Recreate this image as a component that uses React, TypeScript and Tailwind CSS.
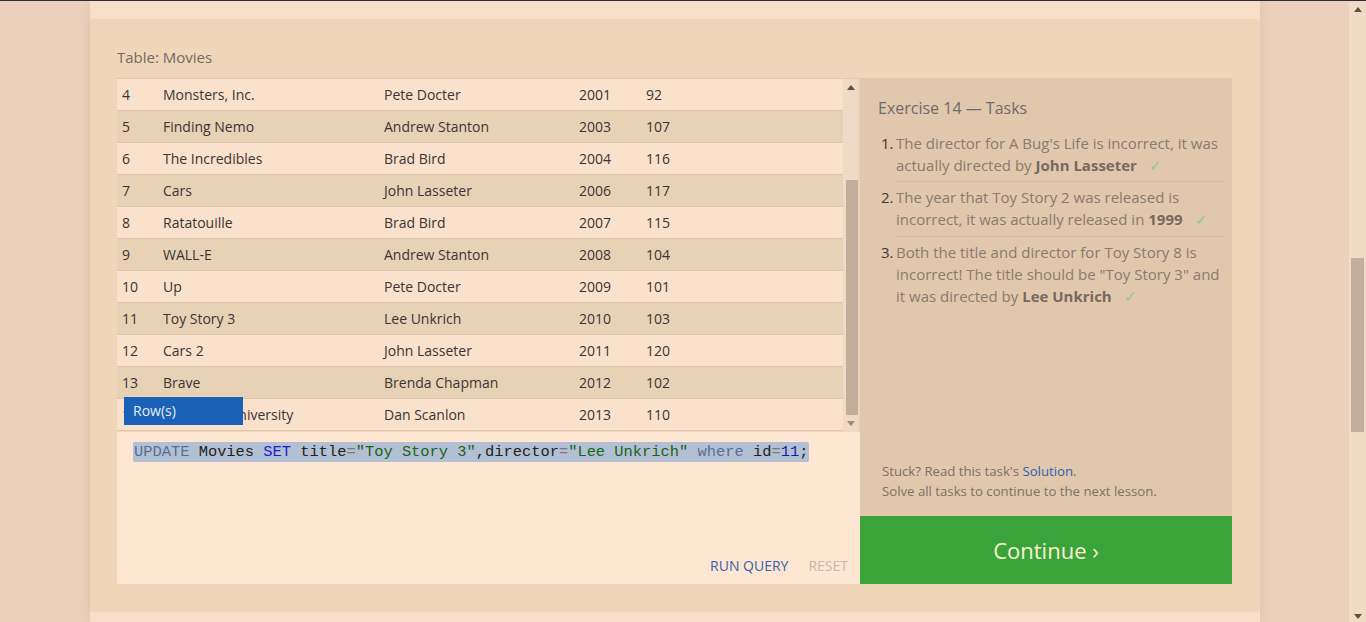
import React from "react";

const rows: [string, string, string, string, string][] = [
  ["4", "Monsters, Inc.", "Pete Docter", "2001", "92"],
  ["5", "Finding Nemo", "Andrew Stanton", "2003", "107"],
  ["6", "The Incredibles", "Brad Bird", "2004", "116"],
  ["7", "Cars", "John Lasseter", "2006", "117"],
  ["8", "Ratatouille", "Brad Bird", "2007", "115"],
  ["9", "WALL-E", "Andrew Stanton", "2008", "104"],
  ["10", "Up", "Pete Docter", "2009", "101"],
  ["11", "Toy Story 3", "Lee Unkrich", "2010", "103"],
  ["12", "Cars 2", "John Lasseter", "2011", "120"],
  ["13", "Brave", "Brenda Chapman", "2012", "102"],
  ["14", "Monsters University", "Dan Scanlon", "2013", "110"],
];

function UpArrow({ color = "#5a4f46" }: { color?: string }) {
  return (
    <svg width="8" height="5" viewBox="0 0 8 5">
      <path d="M0 5 L4 0 L8 5 Z" fill={color} />
    </svg>
  );
}
function DownArrow({ color = "#5a4f46" }: { color?: string }) {
  return (
    <svg width="8" height="5" viewBox="0 0 8 5">
      <path d="M0 0 L4 5 L8 0 Z" fill={color} />
    </svg>
  );
}

function Check() {
  return <span className="ml-[12px] text-[#8ec88a] font-normal">✓</span>;
}

export default function App() {
  return (
    <div
      className="w-[1366px] h-[622px] overflow-hidden bg-[#ebd1bb] flex flex-col"
      style={{ fontFamily: '"Open Sans", "Noto Sans", sans-serif' }}
    >
      <div className="h-px bg-[#2c2b36] shrink-0" />
      <div className="flex flex-1 min-h-0">
        <div className="w-[90px] shrink-0" />
        {/* card */}
        <div className="w-[1170px] shrink-0 bg-[#f8dfc7] flex flex-col shadow-[0_0_14px_rgba(120,80,40,0.12)] relative z-10">
          <div className="h-[18px] shrink-0" />
          <div className="h-[593px] shrink-0 bg-[#efd6b9] rounded-[3px] pl-[27px] pt-[38px]">
            <div className="text-[15px] leading-[20px] text-[#726b66] -mt-[10px]">Table: Movies</div>
            <div className="mt-[11px] flex">
              {/* left column */}
              <div className="w-[743px] shrink-0 flex flex-col">
                <div className="h-[354px] border-t border-[#e3cbb1] flex relative">
                  <div className="w-[726px] shrink-0 overflow-hidden">
                    {rows.map((r, i) => (
                      <div
                        key={r[0]}
                        className={`h-[32px] flex items-center border-b border-[#dfc6ad] text-[14px] text-[#3a3532] pl-[5px] ${
                          i % 2 === 0 ? "bg-[#f9e1cc]" : "bg-[#e8d2b6]"
                        }`}
                      >
                        <span className="w-[41px] shrink-0">{r[0]}</span>
                        <span className="w-[221px] shrink-0">{r[1]}</span>
                        <span className="w-[195px] shrink-0">{r[2]}</span>
                        <span className="w-[67px] shrink-0">{r[3]}</span>
                        <span>{r[4]}</span>
                      </div>
                    ))}
                  </div>
                  <div className="w-[15px] shrink-0 bg-[#f0dac5] flex flex-col items-center">
                    <div className="h-[15px] flex items-center justify-center pt-[2px]">
                      <UpArrow />
                    </div>
                    <div className="h-[86px]" />
                    <div className="w-[12px] h-[235px] bg-[#c0ad9b] ml-[2px]" />
                    <div className="h-[17px] flex items-center justify-center">
                      <DownArrow color="#9a8d82" />
                    </div>
                  </div>
                  <div className="w-[2px] shrink-0 bg-[#e9d3bb]" />
                  <div className="absolute left-[7px] top-[319px] w-[119px] h-[28px] bg-[#1a62b8] text-[#e6eefb] text-[14px] leading-[28px] pl-[9px] -mt-px">
                    Row(s)
                  </div>
                </div>
                <div className="h-[152px] bg-[#fde6d2] flex flex-col">
                  <div className="flex pl-[16px] pt-[10px]">
                    <span
                      className="block bg-[#b3c0d3] rounded-[2px] px-[1px] h-[20px] leading-[20px] text-[15.4px] whitespace-pre text-[#222]"
                      style={{ fontFamily: '"Liberation Mono", "DejaVu Sans Mono", monospace' }}
                    >
                      <span className="text-[#5a6d98]">UPDATE</span>
                      {" Movies "}
                      <span className="text-[#1c1cd0]">SET</span>
                      {" title"}
                      <span className="text-[#7a7a7a]">=</span>
                      <span className="text-[#186418]">"Toy Story 3"</span>
                      {",director"}
                      <span className="text-[#7a7a7a]">=</span>
                      <span className="text-[#186418]">"Lee Unkrich"</span>{" "}
                      <span className="text-[#5a6d98]">where</span>
                      {" id"}
                      <span className="text-[#7a7a7a]">=</span>
                      <span className="text-[#1a1aa8]">11</span>;
                    </span>
                  </div>
                  <div className="flex-1" />
                  <div className="flex justify-end items-center gap-[20px] pr-[12px] pb-[8px] text-[14px] leading-[20px]">
                    <span className="text-[#3a5fab]">RUN QUERY</span>
                    <span className="text-[#cbb8a6]">RESET</span>
                  </div>
                </div>
              </div>
              {/* right column */}
              <div className="w-[372px] shrink-0 flex flex-col">
                <div className="h-[438px] bg-[#e1c8ac] flex flex-col pl-[18px] pr-[7px]">
                  <div className="pt-[19px] text-[16px] leading-[22px] text-[#6e6a6c]">Exercise 14 — Tasks</div>
                  <ol className="mt-[13px] text-[15px] leading-[22px] text-[#887b70]">
                    <li className="flex pb-[4px]">
                      <span className="w-[18px] shrink-0 text-[#403a36] pl-[3px]">1.</span>
                      <div className="flex-1 border-b border-[#d4bca2] pb-[5px] whitespace-nowrap">
                        The director for A Bug's Life is incorrect, it was
                        <br />
                        actually directed by <b className="text-[#76695e]">John Lasseter</b>
                        <Check />
                      </div>
                    </li>
                    <li className="flex pb-[4px]">
                      <span className="w-[18px] shrink-0 text-[#403a36] pl-[3px]">2.</span>
                      <div className="flex-1 border-b border-[#d4bca2] pb-[6px] whitespace-nowrap">
                        The year that Toy Story 2 was released is
                        <br />
                        incorrect, it was actually released in <b className="text-[#76695e]">1999</b>
                        <Check />
                      </div>
                    </li>
                    <li className="flex">
                      <span className="w-[18px] shrink-0 text-[#403a36] pl-[3px]">3.</span>
                      <div className="flex-1 whitespace-nowrap">
                        Both the title and director for Toy Story 8 is
                        <br />
                        incorrect! The title should be "Toy Story 3" and
                        <br />
                        it was directed by <b className="text-[#76695e]">Lee Unkrich</b>
                        <Check />
                      </div>
                    </li>
                  </ol>
                  <div className="flex-1" />
                  <div className="pl-[4px] pb-[15px] text-[13.2px] leading-[20px] text-[#7b7068]">
                    <div>
                      Stuck? Read this task's <span className="text-[#2f5fb3]">Solution</span>.
                    </div>
                    <div>Solve all tasks to continue to the next lesson.</div>
                  </div>
                </div>
                <div className="h-[68px] bg-[#3aa43b] flex items-center justify-center text-[22px] text-[#fdf1d0]">
                  Continue ›
                </div>
              </div>
            </div>
          </div>
        </div>
        <div className="w-[89px] shrink-0" />
        {/* page scrollbar */}
        <div className="w-[17px] shrink-0 bg-[#f2dbc5] flex flex-col items-center">
          <div className="h-[16px] flex items-center justify-center">
            <UpArrow />
          </div>
          <div className="h-[241px]" />
          <div className="w-[13px] h-[174px] bg-[#c1ae9c]" />
          <div className="flex-1" />
          <div className="h-[12px] flex items-center justify-center">
            <DownArrow />
          </div>
        </div>
      </div>
    </div>
  );
}
